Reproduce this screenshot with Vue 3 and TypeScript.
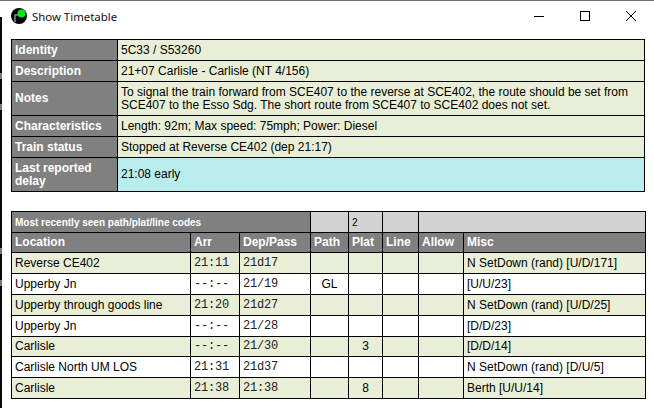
<template>
  <div class="window">
    <div class="titlebar">
      <svg class="app-icon" width="16" height="16" viewBox="0 0 16 16">
        <circle cx="8" cy="8" r="8" fill="#000" />
        <path d="M4 14V7h5" fill="none" stroke="#8a8a8a" stroke-width="1.5" />
        <circle cx="10.5" cy="5.5" r="4" fill="#00e81c" />
      </svg>
      <span class="title">Show Timetable</span>
      <div class="controls">
        <svg width="46" height="30" viewBox="0 0 46 30"><path d="M18 15.5h10" stroke="#000" /></svg>
        <svg width="46" height="30" viewBox="0 0 46 30"><rect x="18.5" y="10.5" width="9" height="9" fill="none" stroke="#000" /></svg>
        <svg width="46" height="30" viewBox="0 0 46 30"><path d="M18 10l10 10M28 10L18 20" stroke="#000" fill="none" /></svg>
      </div>
    </div>

    <div class="content">
      <table class="info">
        <colgroup><col class="c-label" /><col /></colgroup>
        <tbody>
          <tr v-for="row in info" :key="row.label" :style="{ height: row.height + 'px' }">
            <th>{{ row.label }}</th>
            <td :class="{ delay: row.delay }">{{ row.value }}</td>
          </tr>
        </tbody>
      </table>

      <table class="times">
        <colgroup>
          <col v-for="w in colWidths" :key="w.name" :style="{ width: w.width + 'px' }" />
        </colgroup>
        <thead>
          <tr class="codes">
            <th colspan="3">Most recently seen path/plat/line codes</th>
            <td></td>
            <td>2</td>
            <td></td>
            <td colspan="2"></td>
          </tr>
          <tr class="heads">
            <th v-for="w in colWidths" :key="w.name">{{ w.name }}</th>
          </tr>
        </thead>
        <tbody>
          <tr v-for="(s, i) in stops" :key="i" :style="{ height: s.height + 'px' }">
            <td>{{ s.location }}</td>
            <td class="mono">{{ s.arr }}</td>
            <td class="mono">{{ s.dep }}</td>
            <td class="mid">{{ s.path }}</td>
            <td class="mid">{{ s.plat }}</td>
            <td></td>
            <td></td>
            <td>{{ s.misc }}</td>
          </tr>
        </tbody>
      </table>
    </div>
  </div>
</template>

<script setup lang="ts">
interface InfoRow {
  label: string
  value: string
  height: number
  delay?: boolean
}

interface Stop {
  location: string
  arr: string
  dep: string
  path: string
  plat: string
  misc: string
  height: number
}

const info: InfoRow[] = [
  { label: 'Identity', value: '5C33 / S53260', height: 21 },
  { label: 'Description', value: '21+07 Carlisle - Carlisle (NT 4/156)', height: 21 },
  {
    label: 'Notes',
    value: 'To signal the train forward from SCE407 to the reverse at SCE402, the route should be set from SCE407 to the Esso Sdg. The short route from SCE407 to SCE402 does not set.',
    height: 34,
  },
  { label: 'Characteristics', value: 'Length: 92m; Max speed: 75mph; Power: Diesel', height: 21 },
  { label: 'Train status', value: 'Stopped at Reverse CE402 (dep 21:17)', height: 21 },
  { label: 'Last reported delay', value: '21:08 early', height: 34, delay: true },
]

const colWidths = [
  { name: 'Location', width: 179 },
  { name: 'Arr', width: 49 },
  { name: 'Dep/Pass', width: 71 },
  { name: 'Path', width: 38 },
  { name: 'Plat', width: 34 },
  { name: 'Line', width: 36 },
  { name: 'Allow', width: 45 },
  { name: 'Misc', width: 182 },
]

const stops: Stop[] = [
  { location: 'Reverse CE402', arr: '21:11', dep: '21d17', path: '', plat: '', misc: 'N SetDown (rand) [U/D/171]', height: 21 },
  { location: 'Upperby Jn', arr: '--:--', dep: '21/19', path: 'GL', plat: '', misc: '[U/U/23]', height: 21 },
  { location: 'Upperby through goods line', arr: '21:20', dep: '21d27', path: '', plat: '', misc: 'N SetDown (rand) [U/D/25]', height: 21 },
  { location: 'Upperby Jn', arr: '--:--', dep: '21/28', path: '', plat: '', misc: '[D/D/23]', height: 21 },
  { location: 'Carlisle', arr: '--:--', dep: '21/30', path: '', plat: '3', misc: '[D/D/14]', height: 20 },
  { location: 'Carlisle North UM LOS', arr: '21:31', dep: '21d37', path: '', plat: '', misc: 'N SetDown (rand) [D/U/5]', height: 21 },
  { location: 'Carlisle', arr: '21:38', dep: '21:38', path: '', plat: '8', misc: 'Berth [U/U/14]', height: 21 },
]
</script>

<style scoped>
.window {
  width: 654px;
  height: 408px;
  box-sizing: border-box;
  padding-left: 2px;
  /* dark desktop strip showing down the left of the window */
  background:
    linear-gradient(
      #fff 0 16px,
      #0a0a0a 16px 72px,
      #777 72px 78px,
      #0a0a0a 78px 103px,
      #777 103px 109px,
      #0a0a0a 109px 247px,
      #777 247px 253px,
      #0a0a0a 253px 279px,
      #777 279px 285px,
      #0a0a0a 285px
    ) left top / 2px 100% no-repeat,
    #fff;
  border-top: 1px solid #6f6f6f;
  font-family: "Liberation Sans", Arial, sans-serif;
  overflow: hidden;
  color: #000;
}

.titlebar {
  display: flex;
  align-items: center;
  height: 30px;
  padding-left: 9px;
}

.app-icon {
  margin-right: 5px;
}

.title {
  font-family: "Noto Sans", "Open Sans", sans-serif;
  font-size: 11.4px;
  color: #111;
}

.controls {
  display: flex;
  margin-left: auto;
}

.content {
  padding: 8px 9px 0 9px;
}

table {
  border-collapse: collapse;
  table-layout: fixed;
  width: 634px;
  font-size: 12px;
}

th,
td {
  border: 1px solid #000;
  padding: 0 3px;
  text-align: left;
  line-height: 13px;
}

th {
  background: #808080;
  color: #fff;
  font-weight: bold;
}

.info td {
  background: #e9efd6;
}

.info td.delay {
  background: #b9ecec;
}

.c-label {
  width: 106px;
}

.times {
  margin-top: 19px;
}

.codes {
  height: 21px;
}

.codes th {
  font-size: 10px;
}

.codes td {
  background: #d3d3d3;
  font-size: 10px;
}

.heads {
  height: 20px;
}

.times tbody tr:nth-child(odd) td {
  background: #e9efd6;
}

.mono {
  font-family: "Liberation Mono", "Courier New", monospace;
  font-size: 12px;
  letter-spacing: -0.2px;
  color: #222;
}

.mid {
  text-align: center;
}
</style>

<style>
html,
body {
  margin: 0;
  background: #fff;
}
</style>
